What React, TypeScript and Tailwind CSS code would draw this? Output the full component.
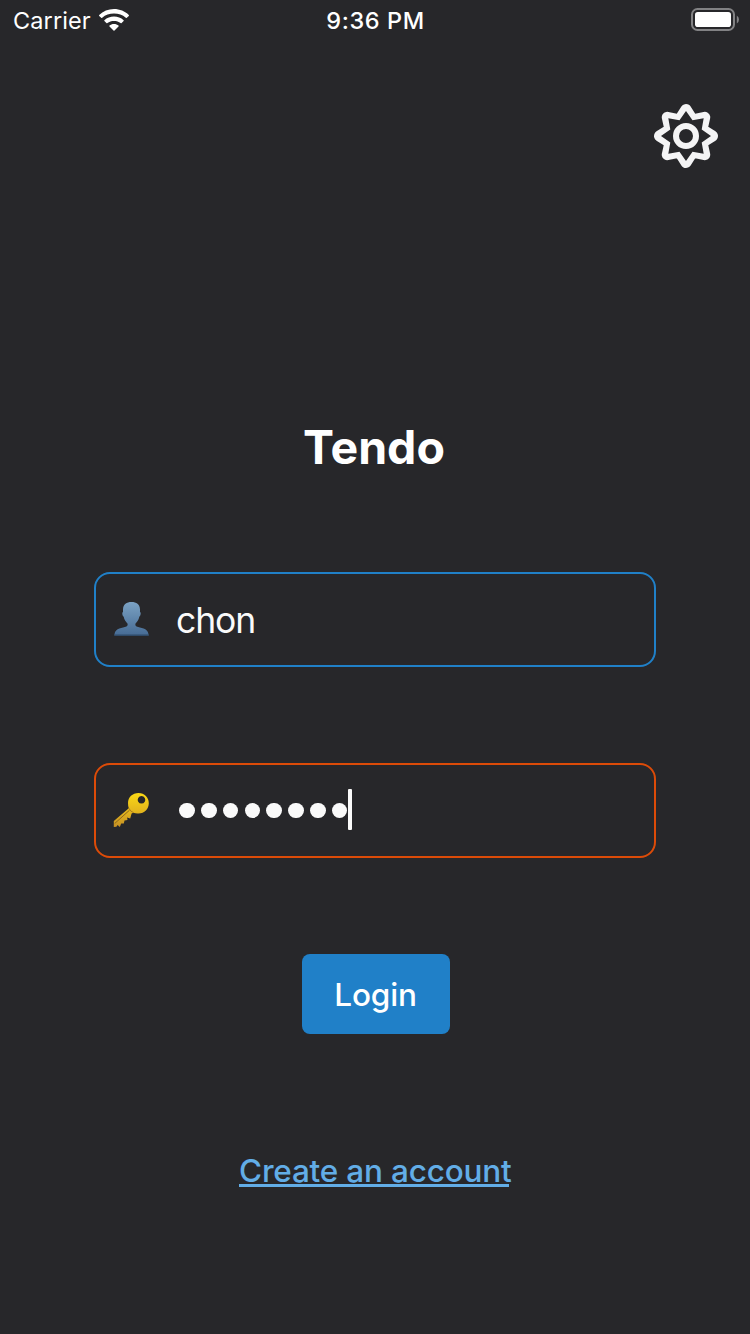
const passwordLength = 8;

function starPoints(tip: number, notch: number) {
  return Array.from({ length: 16 }, (_, i) => {
    const radius = i % 2 === 0 ? tip : notch;
    const angle = (i * Math.PI) / 8;
    return `${(33 + radius * Math.sin(angle)).toFixed(2)},${(33 - radius * Math.cos(angle)).toFixed(2)}`;
  }).join(" ");
}

function Wifi() {
  return (
    <svg className="h-[24px] w-[32px]" viewBox="0 0 32 24" fill="white">
      <path d="M16 1.1C10.3 1.1 5 3.300 1.200 7Q.8 7.500 1.200 7.900L3.200 9.800Q3.700 10.200 4.200 9.800C7.400 6.800 11.500 5.600 16 5.600S24.600 6.800 27.800 9.800Q28.300 10.200 28.800 9.800L30.800 7.900Q31.200 7.500 30.800 7C27 3.300 21.700 1.100 16 1.100Z" />
      <path d="M16 8.600C12.400 8.600 9 9.900 6.400 12.200Q5.900 12.700 6.400 13.100L8.400 15Q8.900 15.400 9.400 15C11.200 13.500 13.500 12.900 16 12.900S20.800 13.500 22.600 15Q23.100 15.400 23.600 15L25.600 13.100Q26.100 12.700 25.600 12.200C23 9.900 19.600 8.600 16 8.600Z" />
      <path d="M16 15.900C14.200 15.900 12.600 16.500 11.500 17.400Q11 17.900 11.500 18.400L15.500 22.500Q16 23 16.500 22.500L20.500 18.400Q21 17.900 20.500 17.400C19.400 16.500 17.800 15.900 16 15.900Z" />
    </svg>
  );
}

function Battery() {
  return (
    <svg className="h-[24px] w-[48px]" viewBox="0 0 48 24">
      <rect x="1" y="1" width="42" height="21" rx="5.500" fill="none" stroke="#828284" strokeWidth="2" />
      <rect x="4" y="4" width="36" height="15" rx="2.800" fill="white" />
      <path d="M45.800 7.600Q48 9 48 11.500T45.800 15.400Z" fill="#828284" />
    </svg>
  );
}

function Gear() {
  return (
    <svg className="size-[66px]" viewBox="0 0 66 66">
      <polygon points={starPoints(26.5, 17.4)} fill="#f4f4f5" stroke="#f4f4f5" strokeWidth="11" strokeLinejoin="round" />
      <polygon points={starPoints(25, 17)} fill="#27272a" />
      <circle cx="33" cy="33" r="10" fill="none" stroke="#f4f4f5" strokeWidth="6" />
    </svg>
  );
}

function Person() {
  return (
    <svg className="size-[38px]" viewBox="0 0 38 38">
      <defs>
        <linearGradient id="person" x1="0" y1="0" x2="0" y2="1">
          <stop offset="0" stopColor="#7ba2c4" />
          <stop offset="1" stopColor="#456a93" />
        </linearGradient>
      </defs>
      <path d="M18.500 2C13.500 2 10.300 4 10 9.500V12C8.800 12.500 9.300 15.800 10.700 16.700C11.300 19.800 13 21.800 14.600 23.800Q15.200 25.600 13.500 26.600C9.500 28.500 2.500 27.300 1.400 34.500Q1.300 36 2.400 36H34.500Q35.900 36 35.600 34.500C34.500 27.300 27.500 28.500 23.500 26.600Q21.800 25.600 22.400 23.800C24 21.800 25.700 19.800 26.300 16.700C27.700 15.800 28.200 12.500 27 12V9.500C26.700 4 23.500 2 18.500 2Z" fill="url(#person)" />
      <path d="M1.700 35.300H35.300" stroke="#2f4a68" strokeWidth="1.400" />
    </svg>
  );
}

function Key() {
  return (
    <svg className="size-[38px]" viewBox="0 0 38 38">
      <defs>
        <linearGradient id="key" x1="0" y1="0" x2="0" y2="1">
          <stop offset="0" stopColor="#fbd915" />
          <stop offset=".55" stopColor="#e3b51d" />
          <stop offset="1" stopColor="#c48f25" />
        </linearGradient>
      </defs>
      <path fillRule="evenodd" fill="url(#key)" d="M25.500 2C19.500 2 15 6.300 15 12Q15 15.500 15.800 17.200L.8 30V36L3.400 35.800L4.600 34.100L6.800 36L8.200 32.500L10.800 32.600L11.500 29.400L14.500 29L14.100 26.600L17.200 27.400L18.600 22.600L20.200 21.800Q22.800 22.700 25.500 22.500C31.500 22.500 35.800 18 35.800 12.200S31.500 2 25.500 2ZM28.500 5A3.800 3.800 0 1 1 28.490 5Z" />
      <path d="M1.700 32.500L16.500 19.200" stroke="#8e681d" strokeWidth="1" />
      <path d="M15.800 17.200Q17.500 20.700 20.500 21.600" stroke="#ab7d1c" strokeWidth="1" fill="none" />
    </svg>
  );
}

export default function App() {
  return (
    <main className="flex h-[1334px] w-[750px] flex-col items-center bg-[#27272a] font-['Inter',sans-serif] text-white">
      <header className="grid h-10 w-full grid-cols-3 items-center pr-[11px] pl-[13px]">
        <div className="flex items-center gap-[7.500px]">
          <span className="pt-[2px] text-[23.500px] leading-[38px] tracking-[0.100px]">Carrier</span>
          <Wifi />
        </div>
        <span className="pt-[2px] pr-px text-center text-[23.500px] leading-[38px] font-[550] tracking-[0.600px]">9:36 PM</span>
        <div className="flex justify-end"><Battery /></div>
      </header>

      <div className="flex w-full justify-end pt-[63px] pr-[31px]">
        <button aria-label="Settings"><Gear /></button>
      </div>

      <h1 className="mt-[248px] h-[60px] pr-[2px] text-[46.500px] leading-[60px] font-bold">Tendo</h1>

      <form className="flex flex-col items-center">
        <div className="mt-[95px] flex h-[95px] w-[562px] items-center rounded-[16px] border-2 border-[#2080c8] pb-[2px] pl-[17px]">
          <Person />
          <span className="ml-[25px] pt-[4px] text-[35.500px] leading-[44px] tracking-[-1.100px] text-[#fafafa]">chon</span>
        </div>
        <div className="mt-24 flex h-[95px] w-[562px] items-center rounded-[16px] border-2 border-[#dc4b08] pb-[2px] pl-[17px]">
          <Key />
          <div className="ml-[28.300px] flex items-center gap-[6.300px] pt-[1.500px]">
            {Array.from({ length: passwordLength }, (_, i) => (
              <span key={i} className="size-[15.500px] rounded-full bg-[#fafafa]" />
            ))}
          </div>
          <span className="ml-[1px] h-[41px] w-[4px] rounded-[1px] bg-[#fafafa]" />
        </div>
        <button type="button" className="mt-24 ml-[2px] h-20 w-[148px] rounded-[8px] bg-[#2080c8] pt-[2px] pr-px text-[31.500px] leading-[78px] font-[460] tracking-[-0.150px]">Login</button>
      </form>

      <a className="mt-[117px] mr-[2px] flex h-[40px] w-[270px] flex-col whitespace-nowrap text-[#62ade7]">
        <span className="h-[33px] text-[31.500px] leading-[40px] font-[450] tracking-[-0.190px]">Create an account</span>
        <span className="h-[3px] shrink-0 bg-[#62ade7]" />
      </a>
    </main>
  );
}
